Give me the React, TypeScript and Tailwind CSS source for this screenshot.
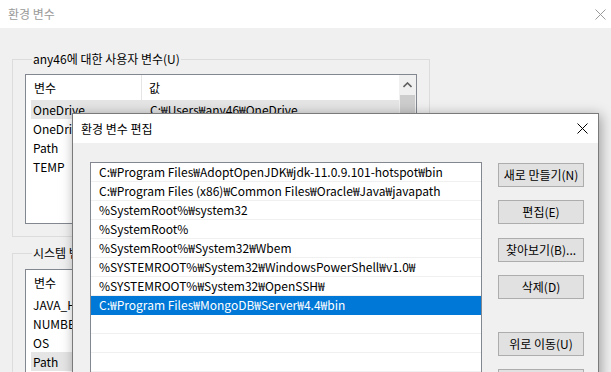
import React from "react";

const font = { fontFamily: '"Noto Sans CJK KR", "Noto Sans", sans-serif' };

const pathRows = [
  "C:₩Program Files₩AdoptOpenJDK₩jdk-11.0.9.101-hotspot₩bin",
  "C:₩Program Files (x86)₩Common Files₩Oracle₩Java₩javapath",
  "%SystemRoot%₩system32",
  "%SystemRoot%",
  "%SystemRoot%₩System32₩Wbem",
  "%SYSTEMROOT%₩System32₩WindowsPowerShell₩v1.0₩",
  "%SYSTEMROOT%₩System32₩OpenSSH₩",
  "C:₩Program Files₩MongoDB₩Server₩4.4₩bin",
  "",
  "",
  "",
];

function CloseX({ color, size = 11 }: { color: string; size?: number }) {
  return (
    <svg width={size} height={size} viewBox="0 0 11 11">
      <path d="M0.5 0.5 L10.5 10.5 M10.5 0.5 L0.5 10.5" stroke={color} strokeWidth="1" />
    </svg>
  );
}

function Btn({ label }: { label: string }) {
  return (
    <div className="w-[86px] h-[24px] border border-[#adadad] bg-[#e1e1e1] flex items-center justify-center text-[12px] text-black leading-none">
      {label}
    </div>
  );
}

function VarList({
  rows,
  highlight,
  scroll,
}: {
  rows: [string, string][];
  highlight: number;
  scroll?: boolean;
}) {
  return (
    <div className="border border-[#828790] bg-white flex h-[150px]">
      <div className="flex-1 flex flex-col pl-[5px]">
        <div className="flex h-[25px] items-center text-[12px] text-black">
          <div className="w-[111px] pl-[3px] h-full flex items-center border-r border-[#e5e5e5]">변수</div>
          <div className="pl-[7px]">값</div>
        </div>
        {rows.map(([a, b], i) => (
          <div
            key={i}
            className={`flex h-[19px] items-center text-[12px] text-black whitespace-nowrap ${
              i === highlight ? "bg-[#e5e5e5]" : ""
            }`}
          >
            <div className="w-[111px] pl-[2px] overflow-hidden">{a}</div>
            <div className="pl-[8px]">{b}</div>
          </div>
        ))}
      </div>
      {scroll && (
        <div className="w-[17px] bg-[#f0f0f0] flex flex-col items-center">
          <div className="h-[20px] flex items-center justify-center">
            <svg width="9" height="6" viewBox="0 0 9 6">
              <path d="M0.5 5 L4.5 1 L8.5 5" stroke="#606060" strokeWidth="1.6" fill="none" />
            </svg>
          </div>
          <div className="w-[15px] flex-1 bg-[#cdcdcd] mb-[40px]" />
        </div>
      )}
    </div>
  );
}

export default function App() {
  return (
    <div className="relative w-[611px] h-[372px] overflow-hidden bg-[#f0f0f0]" style={font}>
      {/* Back window */}
      <div className="h-[28px] bg-white flex items-center justify-between pl-[8px] pr-[5px]">
        <span className="text-[12px] text-[#9a9a9a]">환경 변수</span>
        <CloseX color="#9a9a9a" size={11} />
      </div>
      <div className="pl-[12px] pt-[24px] w-[430px] flex flex-col">
        <fieldset className="border border-[#dcdcdc] px-[12px] pb-[11px] h-[185px] m-0">
          <legend className="px-[1px] ml-[7px] text-[12px] text-black leading-[14px]">
            any46에 대한 사용자 변수(U)
          </legend>
          <div className="mt-[8px]">
            <VarList
              rows={[
                ["OneDrive", "C:₩Users₩any46₩OneDrive"],
                ["OneDrive", ""],
                ["Path", ""],
                ["TEMP", ""],
              ]}
              highlight={0}
              scroll
            />
          </div>
        </fieldset>
        <fieldset className="border border-[#dcdcdc] px-[12px] pb-[11px] h-[160px] mt-[9px] m-0">
          <legend className="px-[1px] ml-[7px] text-[12px] text-black leading-[14px]">
            시스템 변수(S)
          </legend>
          <div className="mt-[9px]">
            <VarList
              rows={[
                ["JAVA_HOME", ""],
                ["NUMBER_OF_PROCESSORS", ""],
                ["OS", ""],
                ["Path", ""],
              ]}
              highlight={3}
            />
          </div>
        </fieldset>
      </div>

      {/* Front dialog */}
      <div className="absolute left-[72px] top-[113px] w-[527px] h-[300px] border border-[#7a7a7a] bg-[#f0f0f0] shadow-[2px_2px_12px_rgba(0,0,0,0.35)] flex flex-col">
        <div className="h-[30px] bg-white flex items-center justify-between pl-[8px] pr-[10px]">
          <span className="text-[12px] text-black">환경 변수 편집</span>
          <CloseX color="#000" size={11} />
        </div>
        <div className="flex pl-[17px] pt-[19px] gap-[16px]">
          <div className="w-[392px] h-[250px] border border-[#828790] bg-white flex flex-col">
            {pathRows.map((r, i) => (
              <div
                key={i}
                className={`h-[19px] shrink-0 flex items-center pl-[8px] text-[12px] whitespace-nowrap border-b ${
                  i === 7
                    ? "bg-[#0078d7] text-white border-[#0078d7]"
                    : "text-black border-[#f0f0f0]"
                }`}
              >
                {r}
              </div>
            ))}
          </div>
          <div className="flex flex-col mt-[1px]">
            <Btn label="새로 만들기(N)" />
            <div className="mt-[13px]"><Btn label="편집(E)" /></div>
            <div className="mt-[14px]"><Btn label="찾아보기(B)..." /></div>
            <div className="mt-[13px]"><Btn label="삭제(D)" /></div>
            <div className="mt-[33px]"><Btn label="위로 이동(U)" /></div>
            <div className="mt-[13px]"><Btn label="아래로 이동(O)" /></div>
          </div>
        </div>
      </div>
    </div>
  );
}
